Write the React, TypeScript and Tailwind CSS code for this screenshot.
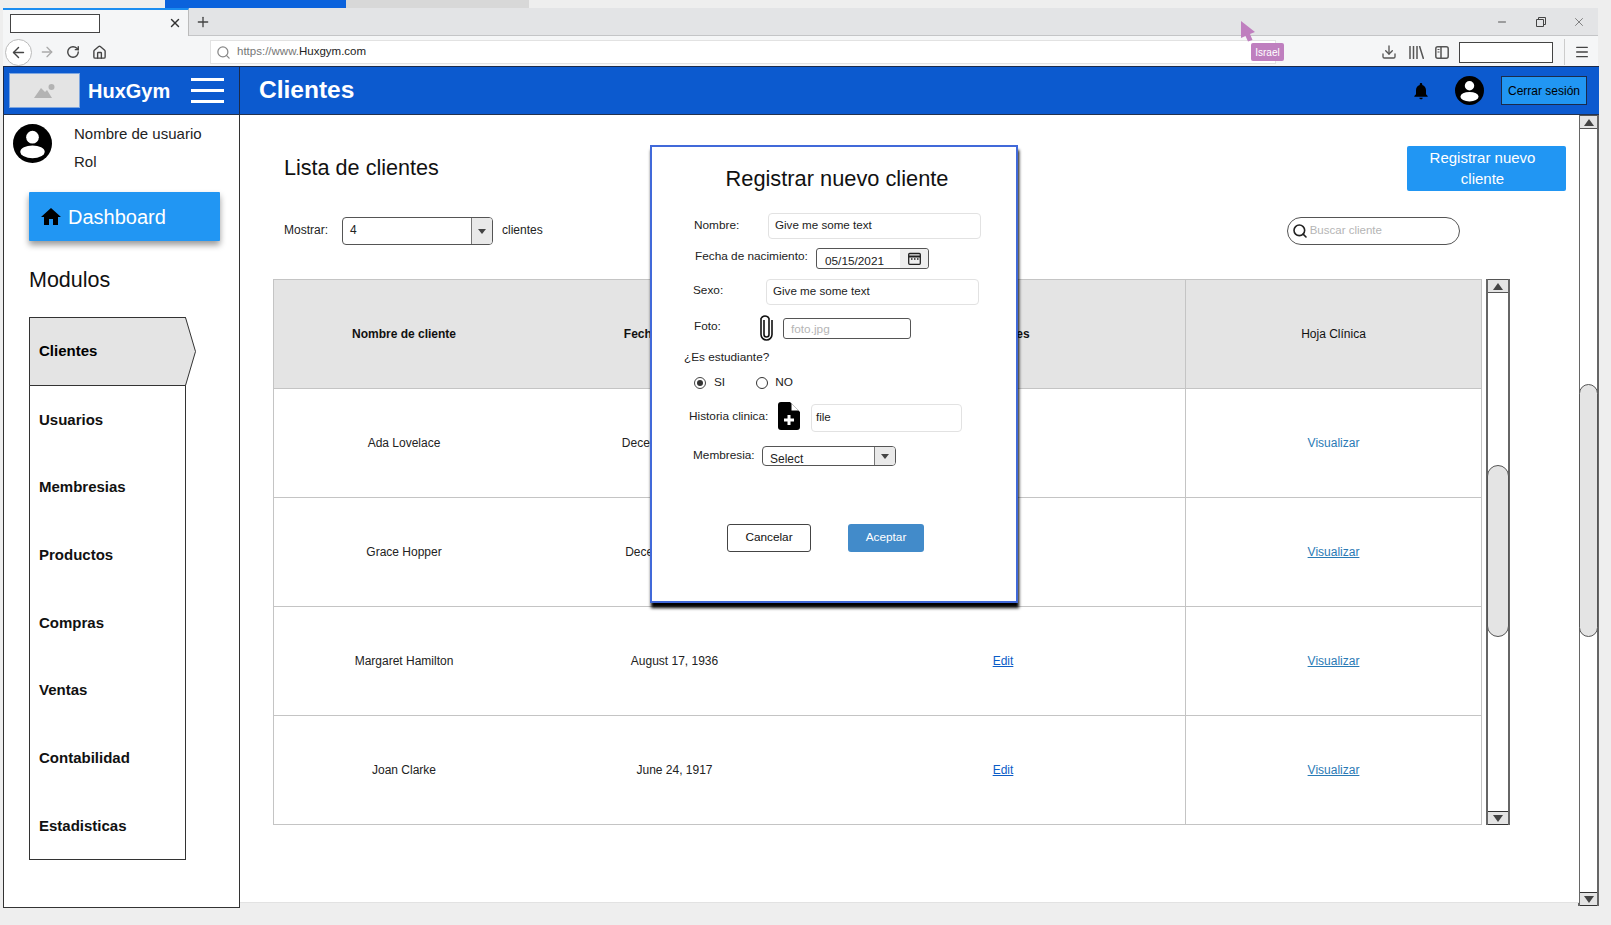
import { ArrowLeft, ArrowRight, Download, House, Menu, Minus, Plus, RotateCw, Search, X } from "lucide-react";
import { MdHome, MdNotifications } from "react-icons/md";

const modules = ["Usuarios", "Membresias", "Productos", "Compras", "Ventas", "Contabilidad", "Estadisticas"];

const clients = [
  { name: "Ada Lovelace", date: "December 10, 1815", plain: true },
  { name: "Grace Hopper", date: "December 9, 1906", plain: false },
  { name: "Margaret Hamilton", date: "August 17, 1936", plain: false },
  { name: "Joan Clarke", date: "June 24, 1917", plain: false },
];

function Avatar({ size }: { size: number }) {
  return (
    <svg width={size} height={size} viewBox="0 0 40 40">
      <circle cx="20" cy="20" r="20" fill="#000" />
      <circle cx="20" cy="13.5" r="6.5" fill="#fff" />
      <ellipse cx="20" cy="28.5" rx="12.5" ry="6.5" fill="#fff" />
    </svg>
  );
}

function Arrow({ up }: { up?: boolean }) {
  return (
    <svg width="10" height="7" viewBox="0 0 10 7">
      <path d={up ? "M5 0 10 7H0Z" : "M0 0H10L5 7Z"} fill="#444" />
    </svg>
  );
}

function Scrollbar({ width, before, thumb, className }: { width: string; before: string; thumb: string; className: string }) {
  return (
    <div className={`flex shrink-0 flex-col border-x-2 border-[#666] bg-white ${width} ${className}`}>
      <div className="flex h-[14px] shrink-0 items-center justify-center border-y border-[#555] bg-[#e4e4e4]">
        <Arrow up />
      </div>
      <div className={`shrink-0 ${before}`} />
      <div className={`-mx-[1px] shrink-0 rounded-[12px] border border-[#555] bg-[#e4e4e4] ${thumb}`} />
      <div className="flex-1" />
      <div className="flex h-[14px] shrink-0 items-center justify-center border-y border-[#333] bg-[#e4e4e4]">
        <Arrow />
      </div>
    </div>
  );
}

function SelectBox({ value, className, arrowWidth }: { value: string; className: string; arrowWidth: string }) {
  return (
    <div className={`flex overflow-hidden rounded-[4px] border border-[#555] bg-white ${className}`}>
      <span className="flex-1 pl-[7px] pt-[3px] text-[12px] leading-[18px] text-[#222]">{value}</span>
      <div className={`flex items-center justify-center border-l border-[#777] bg-[#e9e9e9] ${arrowWidth}`}>
        <svg width="8" height="5" viewBox="0 0 8 5">
          <path d="M0 0H8L4 5Z" fill="#444" />
        </svg>
      </div>
    </div>
  );
}

function TextField({ value, className }: { value: string; className: string }) {
  return (
    <div className={`flex items-center rounded-[4px] border border-[#e2e2e2] bg-white px-[6px] pb-[2px] text-[11.600px] text-[#222] ${className}`}>
      {value}
    </div>
  );
}

function BrowserChrome() {
  return (
    <div className="ml-[3px] w-[1595px]">
      <div className="-ml-[3px] flex h-[8px] pl-[165px]">
        <div className="w-[181px] bg-[#0b62dc]" />
        <div className="w-[183px] bg-[#d8d8d8]" />
      </div>
      <div className="flex h-[28px] items-stretch border-b border-[#c4c5c7] bg-[#e3e4e6]">
        <div className="-mb-[1px] flex w-[186px] items-center border-r border-t-2 border-r-[#bbb] border-t-[#1a8cf0] bg-[#f5f6f7] pl-[7px]">
          <div className="h-[19px] w-[90px] border border-[#444] bg-white" />
          <X size={14} strokeWidth={2.4} className="ml-[68px] text-[#333]" />
        </div>
        <div className="flex w-[28px] items-center justify-center">
          <Plus size={16} className="text-[#444]" />
        </div>
        <div className="flex flex-1 items-center justify-end text-[#555]">
          <Minus size={12} className="mr-[28px]" />
          <svg width="10" height="10" viewBox="0 0 10 10" className="mr-[26px]" fill="none" stroke="#444">
            <path d="M.5 2.5h7v7h-7zM2.5 2.5v-2h7v7h-2" />
          </svg>
          <X size={14} strokeWidth={1.2} className="mr-[12px]" />
        </div>
      </div>
      <div className="flex h-[30px] items-center bg-[#f5f6f7] pt-[2px]">
        <div className="ml-[2px] flex h-[27px] w-[27px] items-center justify-center rounded-full border border-[#bbb] bg-white">
          <ArrowLeft size={17} className="text-[#444]" />
        </div>
        <ArrowRight size={16} className="ml-[7px] text-[#aaa]" />
        <RotateCw size={14} strokeWidth={2.4} className="ml-[11px] text-[#444]" />
        <House size={15} strokeWidth={2.2} className="ml-[12px] text-[#444]" />
        <div className="ml-[103px] flex h-[24px] w-[1066px] items-center border border-[#e2e2e2] bg-white pl-[5px] text-[11.500px]">
          <Search size={15} className="text-[#888]" />
          <span className="ml-[6px] text-[#777]">
            https://www.<span className="text-[#222]">Huxgym.com</span>
          </span>
        </div>
        <Download size={16} className="ml-[105px] text-[#555]" />
        <svg width="15" height="13" viewBox="0 0 15 13" className="ml-[12px]" stroke="#555" strokeWidth="1.5" fill="none">
          <path d="M1 0v13M4.500 0v13M8 0v13M10.500 0l4 13" />
        </svg>
        <svg width="14" height="13" viewBox="0 0 14 13" className="ml-[11px]" stroke="#555" strokeWidth="1.5" fill="none">
          <rect x=".8" y=".8" width="12.400" height="11.400" rx="2" />
          <path d="M6 1v11" />
          <path d="M2.500 3.500h2M2.500 6h2" strokeWidth="1" />
        </svg>
        <div className="ml-[10px] h-[21px] w-[94px] border border-[#444] bg-white" />
        <div className="ml-[11px] h-[26px] w-[1px] bg-[#ccc]" />
        <Menu size={16} strokeWidth={2} className="ml-[9px] text-[#444]" />
      </div>
    </div>
  );
}

function TopBar() {
  return (
    <div className="ml-[3px] flex h-[49px] w-[1596px] border-y border-t-[#1b2a4a] border-b-[#23324f] bg-[#0c5acf] text-white">
      <div className="flex w-[237px] items-center border-x border-[#1b2a4a] pl-[5px]">
        <div className="flex h-[35px] w-[71px] items-center justify-center border border-[#7da6e0] bg-[#e4e4e4]">
          <svg width="22" height="14" viewBox="0 0 22 14" fill="#b3b3b3">
            <circle cx="17.500" cy="3" r="3" />
            <path d="M0 14 7 4l4 4 2-2 5 8Z" />
          </svg>
        </div>
        <span className="ml-[8px] text-[20px] font-bold leading-none">HuxGym</span>
        <div className="ml-[21px] flex h-[25px] w-[33px] flex-col justify-between">
          <div className="h-[3px] bg-white" />
          <div className="h-[3px] bg-white" />
          <div className="h-[3px] bg-white" />
        </div>
      </div>
      <span className="ml-[19px] self-center text-[24.500px] font-bold leading-none">Clientes</span>
      <div className="ml-auto flex items-center pr-[12px] text-black">
        <MdNotifications size={20} />
        <div className="ml-[24px]">
          <Avatar size={29} />
        </div>
        <div className="ml-[17px] flex h-[29px] w-[86px] items-center justify-center border border-[#1b2a4a] bg-[#2196f3] text-[12px]">
          Cerrar sesión
        </div>
      </div>
    </div>
  );
}

function Sidebar() {
  return (
    <aside className="h-[793px] w-[237px] shrink-0 border-x border-b border-[#333] bg-white">
      <div className="flex pl-[9px] pt-[9px]">
        <Avatar size={39} />
        <div className="ml-[22px] text-[15px] leading-[28px] text-[#222]">
          <p className="-mt-[4px]">Nombre de usuario</p>
          <p>Rol</p>
        </div>
      </div>
      <div className="ml-[25px] mt-[16px] flex h-[49px] w-[191px] items-center rounded-[1px] bg-[#2196f3] pl-[10px] text-[20px] text-white shadow-[0_4px_6px_rgba(0,0,0,0.4)]">
        <MdHome size={24} className="text-black" />
        <span className="ml-[5px]">Dashboard</span>
      </div>
      <h2 className="ml-[25px] mt-[26px] text-[21.500px] leading-[26px] text-[#111]">Modulos</h2>
      <div className="ml-[25px] mt-[24px] h-[543px] w-[157px] border-x border-b border-[#333]">
        <div className="relative -ml-[1px] -mr-[10px] h-[69px]">
          <svg className="absolute inset-0" width="168" height="69" viewBox="0 0 168 69">
            <path d="M.5.5H156.500L166.500 34.500 156.500 68.500H.5Z" fill="#e4e4e4" stroke="#333" />
          </svg>
          <span className="absolute left-[10px] top-[25px] text-[15px] font-bold leading-[18px]">Clientes</span>
        </div>
        {modules.map((item) => (
          <div key={item} className="flex h-[67.700px] items-center pl-[9px] text-[15px] font-bold text-[#111]">
            {item}
          </div>
        ))}
      </div>
    </aside>
  );
}

function ClientsTable() {
  const row = "grid grid-cols-[260px_281px_370px_1fr] text-[12px]";
  const centered = "flex items-center justify-center";
  return (
    <div className="w-[1209px] border border-[#c4c4c4]">
      <div className={`${row} h-[108px] bg-[#e4e4e4] font-bold text-[#111]`}>
        <div className={centered}>Nombre de cliente</div>
        <div className={centered}>Fecha nacimiento</div>
        <div className={`${centered} pl-[6px]`}>Acciones</div>
        <div className={`${centered} border-l border-[#c4c4c4] font-normal`}>Hoja Clínica</div>
      </div>
      {clients.map((client) => (
        <div key={client.name} className={`${row} h-[109px] border-t border-[#c4c4c4] text-[#222]`}>
          <div className={centered}>{client.name}</div>
          <div className={centered}>{client.date}</div>
          <div className={`${centered} pl-[6px]`}>
            <span className="text-[#0b5cc7] underline">Edit</span>
          </div>
          <div className={`${centered} border-l border-[#c4c4c4]`}>
            <span className={client.plain ? "text-[#2a7ab5]" : "text-[#2a7ab5] underline"}>Visualizar</span>
          </div>
        </div>
      ))}
    </div>
  );
}

function RegisterModal() {
  return (
    <div className="absolute left-[410px] top-[30px] h-[458px] w-[368px] border-2 border-[#4169d9] bg-white text-[11.800px] text-[#222] shadow-[1px_5px_3px_#000]">
      <h2 className="mt-[19px] pl-[6px] text-center text-[21.800px] leading-[26px] text-[#111]">Registrar nuevo cliente</h2>

      <div className="ml-[42px] mt-[21px] flex h-[26px] items-center">
        <span className="w-[74px]">Nombre:</span>
        <TextField value="Give me some text" className="h-[26px] w-[213px]" />
      </div>

      <div className="ml-[43px] mt-[9px] flex h-[21px]">
        <span className="w-[121px] leading-[16px]">Fecha de nacimiento:</span>
        <div className="flex h-[21px] w-[113px] rounded-[3px] border border-[#555] bg-white">
          <span className="flex-1 pl-[8px] pt-[3px] leading-[18px]">05/15/2021</span>
          <div className="flex w-[28px] items-center justify-center rounded-r-[3px] bg-[#eee]">
            <svg width="13" height="13" viewBox="0 0 13 13" fill="none" stroke="#222" strokeWidth="1.300">
              <rect x=".7" y="1.500" width="11.600" height="10.800" rx="1" />
              <path d="M.7 4.500h11.600" strokeWidth="2" />
              <path d="M3 7h1.500M6 7h1.500M9 7h1.500" />
            </svg>
          </div>
        </div>
      </div>

      <div className="ml-[41px] mt-[10px] flex h-[26px]">
        <span className="w-[73px] leading-[22px]">Sexo:</span>
        <TextField value="Give me some text" className="h-[26px] w-[213px]" />
      </div>

      <div className="ml-[42px] mt-[8px] flex h-[28px]">
        <span className="w-[65px] leading-[26px]">Foto:</span>
        <svg width="15" height="28" viewBox="0 0 15 28" fill="none" stroke="#111" strokeWidth="1.600">
          <path d="M5 7v14.500a2.500 2.500 0 0 0 5 0V5.500a4.500 4.500 0 0 0-8 0v16a5.500 5.500 0 0 0 11 0V7" />
        </svg>
        <div className="ml-[9px] mt-[5px] flex h-[21px] w-[128px] items-center rounded-[3px] border border-[#555] pl-[7px] pt-[3px] text-[#b5b5b5]">
          foto.jpg
        </div>
      </div>

      <p className="ml-[32px] mt-[9px] h-[14px] leading-[14px]">¿Es estudiante?</p>

      <div className="ml-[42px] mt-[12px] flex h-[14px] items-center">
        <span className="flex h-[12px] w-[12px] items-center justify-center rounded-full border border-[#444]">
          <span className="h-[6px] w-[6px] rounded-full bg-[#333]" />
        </span>
        <span className="ml-[8px]">SI</span>
        <span className="ml-[31px] -mt-[1px] h-[12px] w-[12px] rounded-full border border-[#333]" />
        <span className="ml-[7px] -mt-[1px]">NO</span>
      </div>

      <div className="ml-[37px] mt-[12px] flex h-[30px]">
        <span className="w-[89px] leading-[28px]">Historia clinica:</span>
        <svg width="22" height="28" viewBox="0 0 22 28">
          <path d="M3 0H12L22 10V25a3 3 0 0 1-3 3H3a3 3 0 0 1-3-3V3a3 3 0 0 1 3-3Z" fill="#000" />
          <path d="M13.500 1.500V8.500H20.500Z" fill="#fff" />
          <path d="M11 13v10M6 18h10" stroke="#fff" strokeWidth="3" />
        </svg>
        <TextField value="file" className="ml-[11px] mt-[2px] h-[28px] w-[151px] pl-[4px]" />
      </div>

      <div className="ml-[41px] mt-[14px] flex h-[20px]">
        <span className="w-[69px] leading-[18px]">Membresia:</span>
        <SelectBox value="Select" className="h-[20px] w-[134px]" arrowWidth="w-[21px]" />
      </div>

      <div className="ml-[75px] mt-[58px] flex h-[28px]">
        <div className="flex w-[84px] items-center justify-center rounded-[3px] border border-[#444] bg-white text-[#111]">
          Cancelar
        </div>
        <div className="ml-[37px] flex w-[76px] items-center justify-center rounded-[3px] bg-[#428bca] text-white">
          Aceptar
        </div>
      </div>
    </div>
  );
}

function MainPanel() {
  return (
    <main className="relative h-[788px] w-[1339px] shrink-0 border-b border-[#e2e2e2] bg-white">
      <div className="flex h-[31px] items-start" />
      <div className="flex h-[45px] pl-[44px]">
        <h1 className="mt-[9px] text-[21.600px] leading-[26px] text-[#111]">Lista de clientes</h1>
        <div className="ml-auto mr-[13px] flex w-[159px] items-center justify-center rounded-[2px] bg-[#2196f3] pb-[2px] pl-[8px] pr-[16px] text-center text-[15px] leading-[21px] text-white">
          Registrar nuevo cliente
        </div>
      </div>
      <div className="mt-[26px] flex h-[28px] items-center pl-[44px] text-[12px] text-[#222]">
        <span className="-mt-[2px] w-[58px]">Mostrar:</span>
        <SelectBox value="4" className="h-[28px] w-[151px]" arrowWidth="w-[21px]" />
        <span className="-mt-[2px] ml-[9px]">clientes</span>
        <div className="ml-[744px] flex h-[28px] w-[173px] items-center rounded-full border border-[#555] pl-[4px]">
          <Search size={16} strokeWidth={2.4} className="text-[#222]" />
          <span className="ml-[2px] text-[11.500px] text-[#b5b5b5]">Buscar cliente</span>
        </div>
      </div>
      <div className="mt-[34px] flex pl-[33px]">
        <ClientsTable />
        <Scrollbar width="w-[24px]" before="h-[172px]" thumb="h-[172px]" className="ml-[4px] h-[546px]" />
      </div>
      <RegisterModal />
    </main>
  );
}

export default function App() {
  return (
    <div className="relative h-[925px] w-[1611px] overflow-hidden bg-[#eeeeee] font-['Liberation_Sans',Arial,sans-serif]">
      <BrowserChrome />
      <TopBar />
      <div className="ml-[3px] flex">
        <Sidebar />
        <MainPanel />
        <Scrollbar width="w-[21px]" before="h-[255px]" thumb="h-[253px]" className="-ml-[1px] h-[791px]" />
      </div>

      {/* remote cursor from the shared wireframe tool */}
      <div className="absolute left-[1241px] top-[21px]">
        <svg width="15" height="21" viewBox="0 0 15 21">
          <path d="M0 0 14 11 9 13 11.500 19 7 20.500 4.500 15 0 17Z" fill="#bf7fbf" />
        </svg>
      </div>
      <div className="absolute left-[1251px] top-[43px] flex h-[18px] w-[33px] items-center justify-center rounded-[2px] bg-[#bf7fbf] text-[10px] text-white">
        Israel
      </div>
    </div>
  );
}
